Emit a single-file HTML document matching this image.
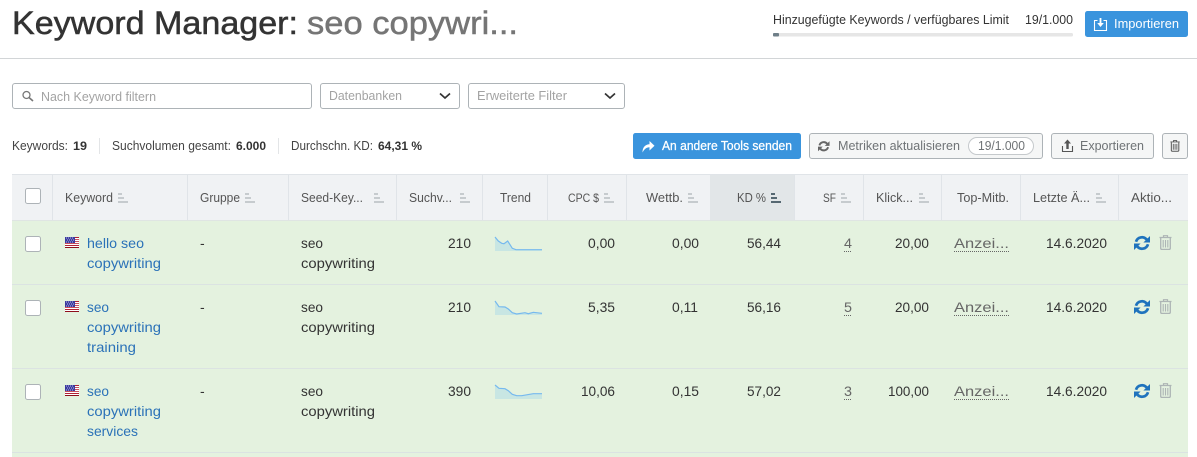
<!DOCTYPE html>
<html lang="de">
<head>
<meta charset="utf-8">
<title>Keyword Manager</title>
<style>
html,body{margin:0;padding:0;background:#fff;width:1197px;height:457px;overflow:hidden}
svg{display:block}
text{font-family:"Liberation Sans",sans-serif;font-size:13px;fill:#333;white-space:pre}
.h{fill:#555;font-size:12.5px}
.hs{fill:#555;font-size:12px}
.r{font-size:14px;fill:#333}
.l{font-size:14px;fill:#2b72b8}
.s{font-size:12.5px;fill:#444}
.b{font-size:12px;font-weight:bold;fill:#333}
.p{font-size:12.5px;fill:#a3a3a3}
.g{font-size:12.5px;fill:#6f7376}
.w{font-size:12.5px;fill:#fff}
.sep{stroke:#e0e4e8;stroke-width:1}
</style>
</head>
<body>
<svg width="1197" height="457" viewBox="0 0 1197 457" xmlns="http://www.w3.org/2000/svg">
<defs>
<g id="sort"><rect x="0" y="0" width="4" height="2"/><rect x="0" y="4" width="6" height="2"/><rect x="0" y="8" width="10" height="2"/></g>
<g id="cb"><rect x="0.5" y="0.5" width="15" height="15" rx="2" fill="#fff" stroke="#adb3b7"/></g>
<g id="flag">
<rect width="14" height="11" fill="#fff"/>
<rect y="0" width="14" height="1" fill="#b22234"/><rect y="2" width="14" height="1" fill="#c8505e"/><rect y="4" width="14" height="1" fill="#c8505e"/><rect y="6" width="14" height="1" fill="#c8505e"/><rect y="8" width="14" height="1" fill="#b22234"/><rect y="10" width="14" height="1" fill="#8f0f1c"/>
<rect width="10" height="6" fill="#3a3a9e"/>
<path d="M1 1H2M3 1H4M5 1H6M7 1H8M2 3H3M4 3H5M6 3H7M8 3H9M1 5H2M3 5H4M5 5H6M7 5H8" stroke="#b9b9e6" stroke-width="1"/>
</g>
<g id="bin">
<path d="M0.5 2.5H12.5M4.5 2.5V0.7H8.5V2.5" fill="none" stroke="currentColor" stroke-width="1.2"/>
<path d="M1.7 3V13.2Q1.7 14.4 3 14.4H10Q11.3 14.4 11.3 13.2V3" fill="none" stroke="currentColor" stroke-width="1.3"/>
<path d="M4.2 5V12.5M6.5 5V12.5M8.8 5V12.5" fill="none" stroke="currentColor" stroke-width="1.1"/>
</g>
<g id="ref">
<path d="M2 6.8A6.2 6.2 0 0 1 12.800 4.600" fill="none" stroke="currentColor" stroke-width="2.700"/>
<path d="M16 1V7.500H9.400Z" fill="currentColor"/>
<path d="M14 9.200A6.2 6.2 0 0 1 3.200 11.400" fill="none" stroke="currentColor" stroke-width="2.700"/>
<path d="M0 15V8.500H6.600Z" fill="currentColor"/>
</g>
</defs>

<!-- page header -->
<text x="12" y="34" textLength="286" lengthAdjust="spacingAndGlyphs" style="font-size:32px;fill:#333;stroke:#333;stroke-width:.5px">Keyword Manager:</text>
<text x="307" y="34" textLength="211" lengthAdjust="spacingAndGlyphs" style="font-size:32px;fill:#757575;stroke:#757575;stroke-width:.5px">seo copywri...</text>
<text x="773" y="24" textLength="236" lengthAdjust="spacingAndGlyphs" class="s" style="fill:#333">Hinzugefügte Keywords / verfügbares Limit</text>
<text x="1025" y="24" textLength="48" lengthAdjust="spacingAndGlyphs" class="s" style="fill:#333">19/1.000</text>
<rect x="773" y="33" width="300" height="3.5" rx="1.5" fill="#e6e6e6"/>
<rect x="773" y="33" width="6" height="3.5" rx="1" fill="#6f7f88"/>
<rect x="1085" y="11" width="103" height="26" rx="2.5" fill="#3a94dd"/>
<path d="M1097.500 20.500H1094.500V30.500H1106.500V20.500H1103.500" fill="none" stroke="#fff" stroke-width="1.100"/>
<path d="M1099.600 18V23H1097.200L1100.500 27L1103.800 23H1101.400V18Z" fill="#fff"/>
<text x="1114" y="28" textLength="65" lengthAdjust="spacingAndGlyphs" class="w">Importieren</text>
<rect x="0" y="58" width="1197" height="1" fill="#d2d5d7"/>

<!-- filters -->
<rect x="12.500" y="83.500" width="299" height="25" rx="2.500" fill="#fff" stroke="#adb3b7"/>
<circle cx="26.500" cy="95" r="3.500" fill="none" stroke="#777" stroke-width="1.300"/>
<path d="M29 97.500L33 101" stroke="#777" stroke-width="1.600"/>
<text x="41" y="101" textLength="115" lengthAdjust="spacingAndGlyphs" class="p">Nach Keyword filtern</text>
<rect x="320.500" y="83.500" width="139" height="25" rx="2.500" fill="#fff" stroke="#adb3b7"/>
<text x="329" y="100" textLength="73" lengthAdjust="spacingAndGlyphs" class="p">Datenbanken</text>
<path d="M440 93.500L445 98L450 93.500" fill="none" stroke="#333" stroke-width="1.700"/>
<rect x="468.500" y="83.500" width="156" height="25" rx="2.500" fill="#fff" stroke="#adb3b7"/>
<text x="477" y="100" textLength="90" lengthAdjust="spacingAndGlyphs" class="p">Erweiterte Filter</text>
<path d="M605 93.500L610 98L615 93.500" fill="none" stroke="#333" stroke-width="1.700"/>

<!-- stats -->
<text x="12" y="150" textLength="56" lengthAdjust="spacingAndGlyphs" class="s">Keywords:</text>
<text x="73" y="150" textLength="14" lengthAdjust="spacingAndGlyphs" class="b">19</text>
<rect x="99" y="138" width="1" height="16" fill="#e3e5e7"/>
<text x="112" y="150" textLength="119" lengthAdjust="spacingAndGlyphs" class="s">Suchvolumen gesamt:</text>
<text x="236" y="150" textLength="30" lengthAdjust="spacingAndGlyphs" class="b">6.000</text>
<rect x="278" y="138" width="1" height="16" fill="#e3e5e7"/>
<text x="291" y="150" textLength="82" lengthAdjust="spacingAndGlyphs" class="s">Durchschn. KD:</text>
<text x="378" y="150" textLength="44" lengthAdjust="spacingAndGlyphs" class="b">64,31 %</text>

<!-- action buttons -->
<rect x="633" y="133" width="168" height="26" rx="2.500" fill="#3a94dd"/>
<path d="M642.500 152.500C642.500 147 645.500 144.500 649.500 144.300V141L654.500 145.800L649.500 150.500V147.200C646.500 147.200 644.200 149 642.500 152.500Z" fill="#fff"/>
<text x="662" y="150" textLength="130" lengthAdjust="spacingAndGlyphs" class="w" style="stroke:#fff;stroke-width:.25px">An andere Tools senden</text>

<rect x="809.500" y="133.500" width="233" height="25" rx="2.500" fill="#f5f6f6" stroke="#adb3b7"/>
<use href="#ref" transform="translate(818 140.500) scale(.72)" style="color:#666"/>
<text x="838" y="150" textLength="122" lengthAdjust="spacingAndGlyphs" class="g">Metriken aktualisieren</text>
<rect x="968.500" y="137.500" width="65" height="17" rx="8.500" fill="#fff" stroke="#c5c9cc"/>
<text x="978" y="150" textLength="47" lengthAdjust="spacingAndGlyphs" class="g">19/1.000</text>

<rect x="1051.500" y="133.500" width="102" height="25" rx="2.500" fill="#f5f6f6" stroke="#adb3b7"/>
<path d="M1062.500 146V151.500H1072.500V146" fill="none" stroke="#555" stroke-width="1.100"/>
<path d="M1067.500 139.500L1071 143.500H1068.700V149H1066.300V143.500H1064Z" fill="#555"/>
<text x="1080" y="150" textLength="64" lengthAdjust="spacingAndGlyphs" class="g">Exportieren</text>

<rect x="1162.500" y="133.500" width="25" height="25" rx="2.500" fill="#f5f6f6" stroke="#adb3b7"/>
<use href="#bin" transform="translate(1170 140) scale(.78)" style="color:#555"/>

<!-- table header -->
<rect x="12" y="174" width="1176" height="46" fill="#f0f2f4"/>
<rect x="710" y="175" width="84" height="45" fill="#e2e6e8"/>
<rect x="12" y="174" width="1176" height="1" fill="#e0e4e8"/>
<g class="sep">
<path d="M52.500 175V220M187.500 175V220M288.500 175V220M396.500 175V220M482.500 175V220M547.500 175V220M626.500 175V220M794.500 175V220M863.500 175V220M941.500 175V220M1020.500 175V220M1118.500 175V220"/>
</g>
<use href="#cb" x="25" y="188"/>
<text x="65" y="202" textLength="48" lengthAdjust="spacingAndGlyphs" class="h">Keyword</text>
<text x="200" y="202" textLength="40" lengthAdjust="spacingAndGlyphs" class="h">Gruppe</text>
<text x="301" y="202" textLength="62" lengthAdjust="spacingAndGlyphs" class="h">Seed-Key...</text>
<text x="409" y="202" textLength="43" lengthAdjust="spacingAndGlyphs" class="h">Suchv...</text>
<text x="500" y="202" textLength="31" lengthAdjust="spacingAndGlyphs" class="h">Trend</text>
<text x="568" y="202" textLength="31" lengthAdjust="spacingAndGlyphs" class="hs">CPC $</text>
<text x="646" y="202" textLength="37" lengthAdjust="spacingAndGlyphs" class="h">Wettb.</text>
<text x="737" y="202" textLength="29" lengthAdjust="spacingAndGlyphs" class="h">KD %</text>
<text x="823" y="202" textLength="13" lengthAdjust="spacingAndGlyphs" class="hs">SF</text>
<text x="876" y="202" textLength="37" lengthAdjust="spacingAndGlyphs" class="h">Klick...</text>
<text x="957" y="202" textLength="52" lengthAdjust="spacingAndGlyphs" class="h">Top-Mitb.</text>
<text x="1033" y="202" textLength="57" lengthAdjust="spacingAndGlyphs" class="h">Letzte Ä...</text>
<text x="1131" y="202" textLength="41" lengthAdjust="spacingAndGlyphs" class="h">Aktio...</text>
<g fill="#c6cbce">
<use href="#sort" x="118" y="193"/><use href="#sort" x="245" y="193"/><use href="#sort" x="374" y="193"/><use href="#sort" x="460" y="193"/><use href="#sort" x="604" y="193"/><use href="#sort" x="688" y="193"/><use href="#sort" x="841" y="193"/><use href="#sort" x="919" y="193"/><use href="#sort" x="1096" y="193"/>
</g>
<use href="#sort" x="771" y="193" fill="#566872"/>

<!-- table body -->
<rect x="12" y="220" width="1176" height="237" fill="#e4f2df"/>
<rect x="12" y="220" width="1176" height="1" fill="#dfe5e3"/>
<rect x="12" y="284" width="1176" height="1" fill="#dbe3e2"/>
<rect x="12" y="368" width="1176" height="1" fill="#dbe3e2"/>
<rect x="12" y="452" width="1176" height="1" fill="#dbe3e2"/>

<!-- row 1 -->
<use href="#cb" x="25" y="236"/>
<use href="#flag" x="65" y="237"/>
<text x="87" y="248" textLength="57" lengthAdjust="spacingAndGlyphs" class="l">hello seo</text>
<text x="87" y="268" textLength="74" lengthAdjust="spacingAndGlyphs" class="l">copywriting</text>
<text x="200" y="248" class="r">-</text>
<text x="301" y="248" textLength="22" lengthAdjust="spacingAndGlyphs" class="r">seo</text>
<text x="301" y="268" textLength="74" lengthAdjust="spacingAndGlyphs" class="r">copywriting</text>
<text x="448" y="248" textLength="23" lengthAdjust="spacingAndGlyphs" class="r">210</text>
<path d="M495 237L498.300 241L501.700 243.300L504 243.700L507.700 241L512.300 248.300L516 249.700L542 249.700V251H495Z" fill="#c8e6e3"/>
<path d="M495 237L498.300 241L501.700 243.300L504 243.700L507.700 241L512.300 248.300L516 249.700L542 249.700" fill="none" stroke="#76b9ee" stroke-width="1.200"/>
<text x="588" y="248" textLength="27" lengthAdjust="spacingAndGlyphs" class="r">0,00</text>
<text x="672" y="248" textLength="27" lengthAdjust="spacingAndGlyphs" class="r">0,00</text>
<text x="747" y="248" textLength="34" lengthAdjust="spacingAndGlyphs" class="r">56,44</text>
<text x="844" y="248" textLength="8" lengthAdjust="spacingAndGlyphs" class="r" style="fill:#666">4</text>
<path d="M844 251.500H852" stroke="#666" stroke-dasharray="1 1"/>
<text x="895" y="248" textLength="34" lengthAdjust="spacingAndGlyphs" class="r">20,00</text>
<text x="954" y="248" textLength="55" lengthAdjust="spacingAndGlyphs" class="r" style="fill:#666">Anzei...</text>
<path d="M954 251.500H1009" stroke="#666" stroke-dasharray="1 1"/>
<text x="1046" y="248" textLength="61" lengthAdjust="spacingAndGlyphs" class="r">14.6.2020</text>
<use href="#ref" x="1134" y="235" style="color:#1f73bd"/>
<use href="#bin" x="1159" y="235" style="color:#adb5b5"/>

<!-- row 2 -->
<use href="#cb" x="25" y="300"/>
<use href="#flag" x="65" y="301"/>
<text x="87" y="312" textLength="22" lengthAdjust="spacingAndGlyphs" class="l">seo</text>
<text x="87" y="332" textLength="74" lengthAdjust="spacingAndGlyphs" class="l">copywriting</text>
<text x="87" y="352" textLength="49" lengthAdjust="spacingAndGlyphs" class="l">training</text>
<text x="200" y="312" class="r">-</text>
<text x="301" y="312" textLength="22" lengthAdjust="spacingAndGlyphs" class="r">seo</text>
<text x="301" y="332" textLength="74" lengthAdjust="spacingAndGlyphs" class="r">copywriting</text>
<text x="448" y="312" textLength="23" lengthAdjust="spacingAndGlyphs" class="r">210</text>
<path d="M495 301L499 306.700L505 307L508.300 309L512.300 312.700L516.700 314L525 312.700L528.300 313.700L533.300 312.300L542 313.300V315H495Z" fill="#c8e6e3"/>
<path d="M495 301L499 306.700L505 307L508.300 309L512.300 312.700L516.700 314L525 312.700L528.300 313.700L533.300 312.300L542 313.300" fill="none" stroke="#76b9ee" stroke-width="1.200"/>
<text x="588" y="312" textLength="27" lengthAdjust="spacingAndGlyphs" class="r">5,35</text>
<text x="672" y="312" textLength="26" lengthAdjust="spacingAndGlyphs" class="r">0,11</text>
<text x="747" y="312" textLength="34" lengthAdjust="spacingAndGlyphs" class="r">56,16</text>
<text x="844" y="312" textLength="8" lengthAdjust="spacingAndGlyphs" class="r" style="fill:#666">5</text>
<path d="M844 315.500H852" stroke="#666" stroke-dasharray="1 1"/>
<text x="895" y="312" textLength="34" lengthAdjust="spacingAndGlyphs" class="r">20,00</text>
<text x="954" y="312" textLength="55" lengthAdjust="spacingAndGlyphs" class="r" style="fill:#666">Anzei...</text>
<path d="M954 315.500H1009" stroke="#666" stroke-dasharray="1 1"/>
<text x="1046" y="312" textLength="61" lengthAdjust="spacingAndGlyphs" class="r">14.6.2020</text>
<use href="#ref" x="1134" y="299" style="color:#1f73bd"/>
<use href="#bin" x="1159" y="299" style="color:#adb5b5"/>

<!-- row 3 -->
<use href="#cb" x="25" y="384"/>
<use href="#flag" x="65" y="385"/>
<text x="87" y="396" textLength="22" lengthAdjust="spacingAndGlyphs" class="l">seo</text>
<text x="87" y="416" textLength="74" lengthAdjust="spacingAndGlyphs" class="l">copywriting</text>
<text x="87" y="436" textLength="51" lengthAdjust="spacingAndGlyphs" class="l">services</text>
<text x="200" y="396" class="r">-</text>
<text x="301" y="396" textLength="22" lengthAdjust="spacingAndGlyphs" class="r">seo</text>
<text x="301" y="416" textLength="74" lengthAdjust="spacingAndGlyphs" class="r">copywriting</text>
<text x="448" y="396" textLength="23" lengthAdjust="spacingAndGlyphs" class="r">390</text>
<path d="M495 385L499 388.300L505 388.700L508.300 390.700L512.300 394.300L516.700 395.700L521.700 395.700L533.300 393.700L542 393.700V399H495Z" fill="#c8e6e3"/>
<path d="M495 385L499 388.300L505 388.700L508.300 390.700L512.300 394.300L516.700 395.700L521.700 395.700L533.300 393.700L542 393.700" fill="none" stroke="#76b9ee" stroke-width="1.200"/>
<text x="581" y="396" textLength="34" lengthAdjust="spacingAndGlyphs" class="r">10,06</text>
<text x="672" y="396" textLength="27" lengthAdjust="spacingAndGlyphs" class="r">0,15</text>
<text x="747" y="396" textLength="34" lengthAdjust="spacingAndGlyphs" class="r">57,02</text>
<text x="844" y="396" textLength="8" lengthAdjust="spacingAndGlyphs" class="r" style="fill:#666">3</text>
<path d="M844 399.500H852" stroke="#666" stroke-dasharray="1 1"/>
<text x="888" y="396" textLength="41" lengthAdjust="spacingAndGlyphs" class="r">100,00</text>
<text x="954" y="396" textLength="55" lengthAdjust="spacingAndGlyphs" class="r" style="fill:#666">Anzei...</text>
<path d="M954 399.500H1009" stroke="#666" stroke-dasharray="1 1"/>
<text x="1046" y="396" textLength="61" lengthAdjust="spacingAndGlyphs" class="r">14.6.2020</text>
<use href="#ref" x="1134" y="383" style="color:#1f73bd"/>
<use href="#bin" x="1159" y="383" style="color:#adb5b5"/>
</svg>
</body>
</html>
